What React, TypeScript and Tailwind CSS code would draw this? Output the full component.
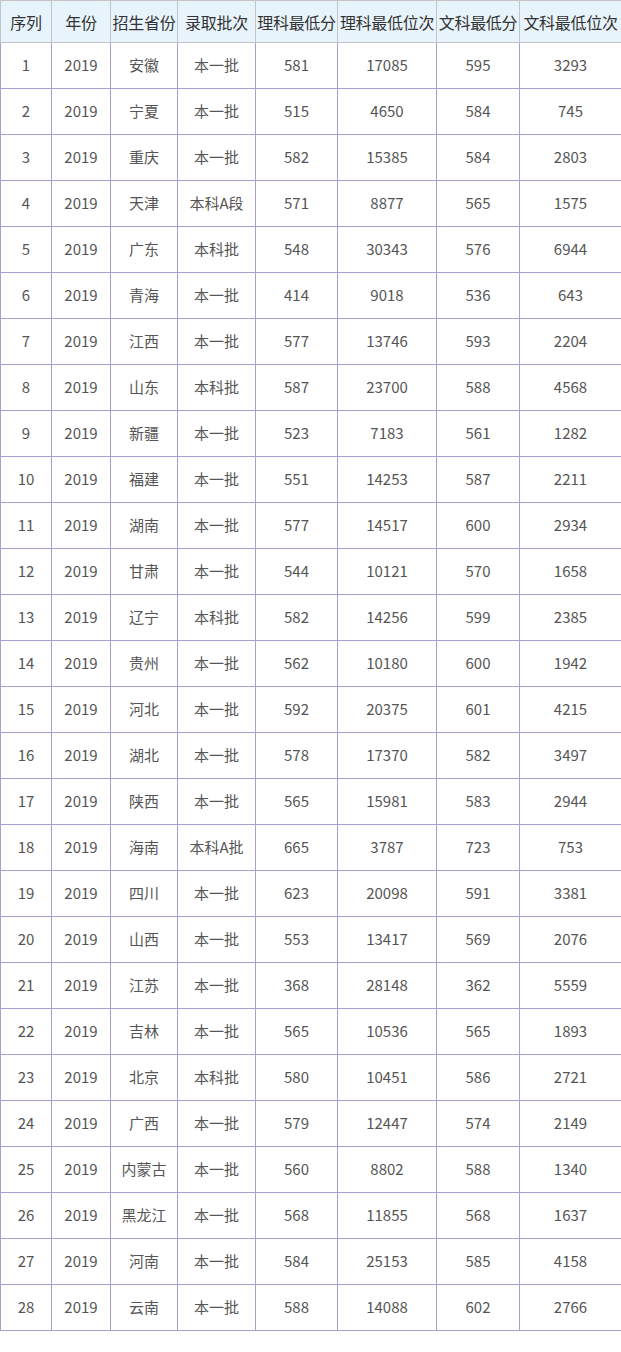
const headers = ['序列', '年份', '招生省份', '录取批次', '理科最低分', '理科最低位次', '文科最低分', '文科最低位次'];

const rows: [string, string, string, string, string, string][] = [
  ['安徽', '本一批', '581', '17085', '595', '3293'],
  ['宁夏', '本一批', '515', '4650', '584', '745'],
  ['重庆', '本一批', '582', '15385', '584', '2803'],
  ['天津', '本科A段', '571', '8877', '565', '1575'],
  ['广东', '本科批', '548', '30343', '576', '6944'],
  ['青海', '本一批', '414', '9018', '536', '643'],
  ['江西', '本一批', '577', '13746', '593', '2204'],
  ['山东', '本科批', '587', '23700', '588', '4568'],
  ['新疆', '本一批', '523', '7183', '561', '1282'],
  ['福建', '本一批', '551', '14253', '587', '2211'],
  ['湖南', '本一批', '577', '14517', '600', '2934'],
  ['甘肃', '本一批', '544', '10121', '570', '1658'],
  ['辽宁', '本科批', '582', '14256', '599', '2385'],
  ['贵州', '本一批', '562', '10180', '600', '1942'],
  ['河北', '本一批', '592', '20375', '601', '4215'],
  ['湖北', '本一批', '578', '17370', '582', '3497'],
  ['陕西', '本一批', '565', '15981', '583', '2944'],
  ['海南', '本科A批', '665', '3787', '723', '753'],
  ['四川', '本一批', '623', '20098', '591', '3381'],
  ['山西', '本一批', '553', '13417', '569', '2076'],
  ['江苏', '本一批', '368', '28148', '362', '5559'],
  ['吉林', '本一批', '565', '10536', '565', '1893'],
  ['北京', '本科批', '580', '10451', '586', '2721'],
  ['广西', '本一批', '579', '12447', '574', '2149'],
  ['内蒙古', '本一批', '560', '8802', '588', '1340'],
  ['黑龙江', '本一批', '568', '11855', '568', '1637'],
  ['河南', '本一批', '584', '25153', '585', '4158'],
  ['云南', '本一批', '588', '14088', '602', '2766'],
];

const widths = ['w-[51px]', 'w-[59px]', 'w-[67px]', 'w-[78px]', 'w-[82px]', 'w-[99px]', 'w-[83px]', 'w-[102px]'];

export default function App() {
  return (
    <div className="min-h-[1352px] w-[621px] bg-white font-['Noto_Sans_CJK_SC','Noto_Sans',sans-serif]">
      <table className="w-[621px] table-fixed border-collapse text-center">
        <colgroup>
          {widths.map((w, i) => (
            <col key={i} className={w} />
          ))}
        </colgroup>
        <thead>
          <tr className="h-[42px] bg-[#e8f4fc]">
            {headers.map((h) => (
              <th
                key={h}
                className="whitespace-nowrap border border-[#c4c4c4] p-0 text-[16px] font-normal tracking-[-0.3px] text-[#333]"
              >
                {h}
              </th>
            ))}
          </tr>
        </thead>
        <tbody>
          {rows.map((r, i) => (
            <tr key={i} className="h-[46px]">
              {[String(i + 1), '2019', ...r].map((c, j) => (
                <td
                  key={j}
                  className="whitespace-nowrap border border-[#a89fd0] p-0 text-[15px] text-[#555]"
                >
                  {c}
                </td>
              ))}
            </tr>
          ))}
        </tbody>
      </table>
    </div>
  );
}
